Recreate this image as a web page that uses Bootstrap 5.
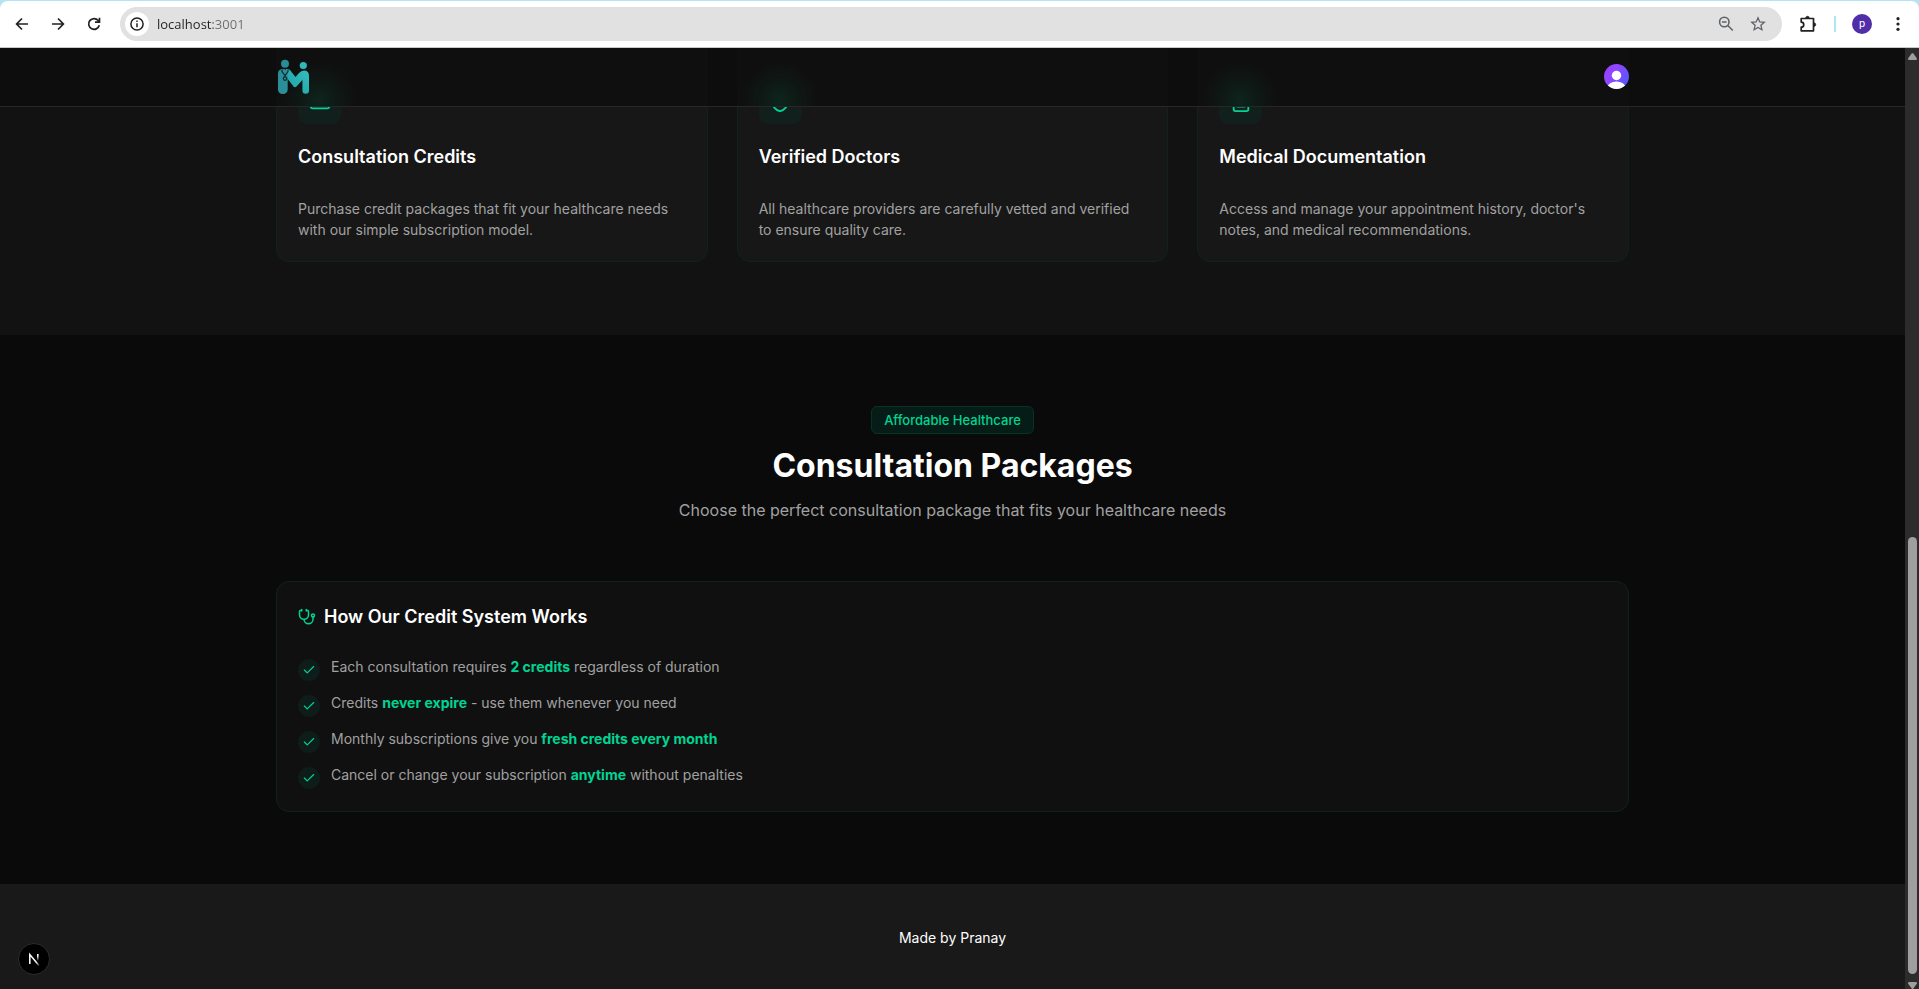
<!DOCTYPE html>
<html lang="en">
<head>
<meta charset="utf-8">
<meta name="viewport" content="width=device-width, initial-scale=1">
<title>Medimeet</title>
<link href="https://cdn.jsdelivr.net/npm/bootstrap@5.3.0/dist/css/bootstrap.min.css" rel="stylesheet">
<style>
  :root { --mint: #00d492; --muted: #a1a1a1; --frame: #b1e6f1; }
  body { font-family: Inter, "Liberation Sans", sans-serif; background: #0a0a0a; color: #fff; font-size: 14px; line-height: 21px; }

  /* browser toolbar */
  .chrome-frame { background: var(--frame); padding-top: 1px; border-bottom: 1px solid #c4ccc8; }
  .chrome-bar { background: #fff; border-radius: 8px 8px 0 0; height: 46px; padding: 0 13px 0 8px; }
  .tool { width: 28px; height: 28px; padding: 0; border: 0; background: none; color: #202124; display: flex; align-items: center; justify-content: center; }
  .omnibox { background: #e1e1e1; height: 34px; border-radius: 17px; padding: 0 10px 0 5px; margin: 0 8px 0 12px; }
  .omnibox .tool { color: #5f6368; }
  .omnibox .site-info { width: 24px; height: 24px; border-radius: 50%; background: #fff; color: #202124; }
  .address { border: 0; outline: 0; padding: 0; font: 13px/20px "Open Sans", "Noto Sans", sans-serif; color: #202124;
    background: linear-gradient(90deg, #202124 56px, #6a6d70 56px); -webkit-background-clip: text; background-clip: text; -webkit-text-fill-color: transparent; }
  .bar-divider { width: 2px; height: 16px; background: var(--frame); margin: 0 16px 0 12px; }
  .profile { width: 20px; height: 20px; border-radius: 50%; background: #512da8; color: #fff; font: 11px/18px Roboto, sans-serif; border: 0; padding: 0; }
  .menu-dots { width: 16px; margin-left: 18px; }

  /* page */
  .wrap { width: 100%; max-width: 1353px; margin: 0 auto; }
  .site-header { top: 0; left: 0; right: 0; height: 59px; z-index: 5; background: #0d0d0d; border-bottom: 1px solid #272727; }
  .header-row { height: 57px; }
  .header-glow { inset: 0; pointer-events: none; }
  .glow-spot { height: 58px; background: radial-gradient(circle 38px at 43px 52px, rgba(0,212,146,.11), rgba(0,212,146,.05) 45%, rgba(0,212,146,0)), #0f0f0f; }
  .brand { margin-left: 2px; }
  .user-btn { width: 25px; height: 25px; border: 0; padding: 0; border-radius: 50%; background: none; }
  .features { background: #121212; padding: 10px 0 73px; }
  .feature-grid { --bs-gutter-x: 29px; }
  .panel { border: 1px solid #0f231c; border-radius: 13px; padding: 22px 28px 21px 21px; background: #171717; }
  .icon-tile { width: 43px; height: 43px; padding-top: 10px; border-radius: 9px; background: #11201c; color: var(--mint); margin-bottom: 19px; }
  .panel-title { font-size: 18px; line-height: 28px; font-weight: 600; margin: 0; }
  .soft { color: var(--muted); }
  .feature-text { margin: 27px 0 0; }
  .pricing { padding: 71px 0 72px; }
  .tagline { display: inline-block; background: #061d17; border: 1px solid #073326; border-radius: 6px; color: var(--mint); font-size: 13px; line-height: 18px; font-weight: 500; padding: 4px 12px; }
  .pricing-title { font-size: 32px; line-height: 36px; font-weight: 700; margin: 14px 0; }
  .lede { font-size: 16px; line-height: 24px; margin: 0 0 59px; }
  .credit-panel { background: #101010; padding-top: 21px; }
  .perks { margin: 25px 0 0; display: grid; gap: 11px; }
  .perks li { gap: 11px; height: 25px; }
  .credit-panel { padding-bottom: 22px; }
  .tick { width: 22px; height: 22px; margin-top: 3px; border-radius: 50%; background: #0e1d19; color: var(--mint); }
  .perks strong { color: var(--mint); font-weight: 700; }
  .site-footer { background: #191919; padding: 43px 0; }
  .dev-badge { left: 18px; bottom: 14px; width: 32px; height: 32px; border-radius: 50%; background: #000; border: 1px solid #2c2c2c; padding: 0; z-index: 6; }

  /* scroll bar */
  .scroll-track { width: 14px; background: #2c2c2c; padding: 5px 0 0; }
  .scroll-rail { padding-top: 3px; padding-bottom: 8px; }
  .scroll-thumb { width: 9px; height: 48%; border-radius: 5px; background: #9f9f9f; }
</style>
</head>
<body>
<div class="vh-100 d-flex flex-column overflow-hidden">
  <div class="chrome-frame flex-shrink-0">
    <div class="chrome-bar d-flex align-items-center">
      <button class="tool" aria-label="Back"><svg width="14" height="14" viewBox="0 0 14 14" fill="none" stroke="currentColor" stroke-width="1.7"><path d="M13 7H2M7 1.5 1.6 7 7 12.5"/></svg></button>
      <button class="tool ms-2" aria-label="Forward"><svg width="14" height="14" viewBox="0 0 14 14" fill="none" stroke="currentColor" stroke-width="1.7"><path d="M1 7h11M7 1.5 12.4 7 7 12.5"/></svg></button>
      <button class="tool ms-2" aria-label="Reload"><svg width="14" height="14" viewBox="0 0 14 14" fill="none" stroke="currentColor" stroke-width="1.7"><path d="M12.3 8.3A5.4 5.4 0 1 1 11.2 3.5L12.6 5M12.5 .8V5.2H8"/></svg></button>
      <div class="omnibox d-flex align-items-center flex-grow-1">
        <button class="tool site-info flex-shrink-0" aria-label="Site information"><svg width="14" height="14" viewBox="0 0 14 14" fill="none" stroke="currentColor" stroke-width="1.5"><circle cx="7" cy="7" r="6.1"/><path d="M7 6.2v4M7 3.6v1.5"/></svg></button>
        <input class="address flex-grow-1 ms-2" type="text" value="localhost:3001" aria-label="Address">
        <button class="tool" aria-label="Zoom"><svg width="16" height="16" viewBox="0 0 16 16" fill="none" stroke="currentColor" stroke-width="1.6"><circle cx="6.3" cy="6" r="4.7"/><path d="m9.8 9.5 5 5M4 6h4.6"/></svg></button>
        <button class="tool ms-1" aria-label="Bookmark"><svg width="16" height="16" viewBox="0 0 16 16" fill="none" stroke="currentColor" stroke-width="1.3"><path d="m8 1.8 1.8 4.1 4.5.4-3.4 3 1 4.4L8 11.4l-3.9 2.3 1-4.4-3.4-3 4.5-.4z"/></svg></button>
      </div>
      <button class="tool ms-1" aria-label="Extensions"><svg width="18" height="18" viewBox="0 0 18 18" fill="none" stroke="currentColor" stroke-width="1.7" stroke-linejoin="round"><path d="M2.2 3.5h12.3v12.3H2.2v-3.6a2.5 2.5 0 0 0 0-5.1z"/><path d="M6.8 3a1.7 1.7 0 0 1 3.4 0zM15 7.9a1.7 1.7 0 0 1 0 3.4z" fill="currentColor" stroke-width=".8"/></svg></button>
      <div class="bar-divider"></div>
      <button class="profile" aria-label="Profile">p</button>
      <button class="tool menu-dots" aria-label="Menu"><svg width="4" height="14" viewBox="0 0 4 14" fill="currentColor"><circle cx="2" cy="1.7" r="1.6"/><circle cx="2" cy="7" r="1.6"/><circle cx="2" cy="12.3" r="1.6"/></svg></button>
    </div>
  </div>

  <div class="d-flex flex-grow-1 overflow-hidden">
    <div class="flex-grow-1 position-relative overflow-hidden">
      <header class="site-header position-absolute">
        <!-- light of the feature icons passing under the bar -->
        <div class="header-glow position-absolute" aria-hidden="true">
          <div class="wrap"><div class="row feature-grid">
            <div class="col-4"><div class="glow-spot"></div></div>
            <div class="col-4"><div class="glow-spot"></div></div>
            <div class="col-4"><div class="glow-spot"></div></div>
          </div></div>
        </div>
        <div class="wrap header-row position-relative d-flex align-items-center justify-content-between">
          <a href="#" aria-label="Home" class="brand d-block lh-1">
            <svg width="32" height="36" viewBox="0 0 32 36">
              <defs><linearGradient id="teal" x1="0" y1="1" x2="1" y2="0"><stop offset="0" stop-color="#1d9fa9"/><stop offset="1" stop-color="#35bdbb"/></linearGradient></defs>
              <circle cx="7" cy="4.7" r="4" fill="#2a8c96"/><circle cx="25.3" cy="6.5" r="3.6" fill="#2eb8ba"/>
              <path d="M8 10Q12 9.500 13.500 13L17.500 18 21 14Q23 11.500 26 11.500 31 11.500 31 17V31.500a3.300 3.300 0 0 1-6.600 0V21L18.500 27.500Q17 29 15.500 27.500L9 19z" fill="url(#teal)"/>
              <rect y="10" width="9.700" height="25" rx="4.600" fill="#2a8f99"/>
              <path d="M4 10.500v2l3 4 3-4v-2M7 16v2" fill="none" stroke="#0d2c30" stroke-width="1.200"/><circle cx="7" cy="19.600" r="1.700" fill="none" stroke="#0d2c30" stroke-width="1.200"/>
            </svg>
          </a>
          <button class="user-btn" aria-label="Account"><svg class="d-block" width="25" height="25" viewBox="0 0 25 25">
            <defs><linearGradient id="violet" x1="0" y1="0" x2="1" y2=".6"><stop offset="0" stop-color="#9b3dff"/><stop offset=".4" stop-color="#9146ff"/><stop offset="1" stop-color="#5a55ff"/></linearGradient><clipPath id="disc"><circle cx="12.500" cy="12.500" r="12.500"/></clipPath></defs>
            <g clip-path="url(#disc)"><rect width="25" height="25" fill="url(#violet)"/><circle cx="12.500" cy="11.500" r="4.700" fill="#fff"/><ellipse cx="12.500" cy="23.500" rx="9" ry="6" fill="#fff"/></g></svg></button>
        </div>
      </header>

      <section class="features">
        <div class="wrap">
          <div class="row feature-grid">
            <div class="col-4"><div class="panel h-100">
              <div class="icon-tile d-flex align-items-start justify-content-center"><svg width="22" height="22" viewBox="0 0 24 24" fill="none" stroke="currentColor" stroke-width="2" stroke-linecap="round" stroke-linejoin="round"><rect width="20" height="14" x="2" y="5" rx="2"/><path d="M2 10h20"/></svg></div>
              <h3 class="panel-title">Consultation Credits</h3>
              <p class="feature-text soft">Purchase credit packages that fit your healthcare needs with our simple subscription model.</p>
            </div></div>
            <div class="col-4"><div class="panel h-100">
              <div class="icon-tile d-flex align-items-start justify-content-center"><svg width="22" height="22" viewBox="0 0 24 24" fill="none" stroke="currentColor" stroke-width="2" stroke-linecap="round" stroke-linejoin="round"><path d="M20 13c0 5-3.500 7.500-7.660 8.950a1 1 0 0 1-.670-.010C7.500 20.500 4 18 4 13V6a1 1 0 0 1 1-1c2 0 4.500-1.200 6.240-2.720a1.170 1.170 0 0 1 1.520 0C14.510 3.810 17 5 19 5a1 1 0 0 1 1 1z"/><path d="m9 12 2 2 4-4"/></svg></div>
              <h3 class="panel-title">Verified Doctors</h3>
              <p class="feature-text soft">All healthcare providers are carefully vetted and verified to ensure quality care.</p>
            </div></div>
            <div class="col-4"><div class="panel h-100">
              <div class="icon-tile d-flex align-items-start justify-content-center"><svg width="22" height="22" viewBox="0 0 24 24" fill="none" stroke="currentColor" stroke-width="2" stroke-linecap="round" stroke-linejoin="round"><path d="M15 2H6a2 2 0 0 0-2 2v16a2 2 0 0 0 2 2h12a2 2 0 0 0 2-2V7z"/><path d="M14 2v4a2 2 0 0 0 2 2h4M10 9H8M16 13H8M16 17H8"/></svg></div>
              <h3 class="panel-title">Medical Documentation</h3>
              <p class="feature-text soft">Access and manage your appointment history, doctor's notes, and medical recommendations.</p>
            </div></div>
          </div>
        </div>
      </section>

      <section class="pricing">
        <div class="wrap">
          <div class="text-center">
            <div class="d-flex justify-content-center"><span class="tagline">Affordable Healthcare</span></div>
            <h2 class="pricing-title">Consultation Packages</h2>
            <p class="lede soft">Choose the perfect consultation package that fits your healthcare needs</p>
          </div>
          <div class="panel credit-panel">
            <h3 class="panel-title d-flex align-items-center gap-2"><svg width="18" height="18" viewBox="0 0 24 24" fill="none" stroke="#00d492" stroke-width="2" stroke-linecap="round" stroke-linejoin="round"><path d="M11 2v2M5 2v2M5 3H4a2 2 0 0 0-2 2v4a6 6 0 0 0 12 0V5a2 2 0 0 0-2-2h-1M8 15a6 6 0 0 0 12 0v-3"/><circle cx="20" cy="10" r="2"/></svg>How Our Credit System Works</h3>
            <ul class="perks list-unstyled soft">
              <li class="d-flex align-items-start"><span class="tick d-flex align-items-center justify-content-center"><svg width="14" height="14" viewBox="0 0 24 24" fill="none" stroke="currentColor" stroke-width="2" stroke-linecap="round" stroke-linejoin="round"><path d="M20 6 9 17l-5-5"/></svg></span><span>Each consultation requires <strong>2 credits</strong> regardless of duration</span></li>
              <li class="d-flex align-items-start"><span class="tick d-flex align-items-center justify-content-center"><svg width="14" height="14" viewBox="0 0 24 24" fill="none" stroke="currentColor" stroke-width="2" stroke-linecap="round" stroke-linejoin="round"><path d="M20 6 9 17l-5-5"/></svg></span><span>Credits <strong>never expire</strong> - use them whenever you need</span></li>
              <li class="d-flex align-items-start"><span class="tick d-flex align-items-center justify-content-center"><svg width="14" height="14" viewBox="0 0 24 24" fill="none" stroke="currentColor" stroke-width="2" stroke-linecap="round" stroke-linejoin="round"><path d="M20 6 9 17l-5-5"/></svg></span><span>Monthly subscriptions give you <strong>fresh credits every month</strong></span></li>
              <li class="d-flex align-items-start"><span class="tick d-flex align-items-center justify-content-center"><svg width="14" height="14" viewBox="0 0 24 24" fill="none" stroke="currentColor" stroke-width="2" stroke-linecap="round" stroke-linejoin="round"><path d="M20 6 9 17l-5-5"/></svg></span><span>Cancel or change your subscription <strong>anytime</strong> without penalties</span></li>
            </ul>
          </div>
        </div>
      </section>

      <footer class="site-footer text-center">Made by Pranay</footer>

      <button class="dev-badge position-absolute d-flex align-items-center justify-content-center" aria-label="Next.js dev tools"><svg width="14" height="14" viewBox="0 0 14 14" fill="none" stroke-width="1.500">
        <defs><linearGradient id="fadeA" x1="0" y1="0" x2="1" y2="1"><stop offset=".7" stop-color="#fff"/><stop offset="1" stop-color="#fff" stop-opacity=".2"/></linearGradient><linearGradient id="fadeB" gradientUnits="userSpaceOnUse" x1="0" y1="2" x2="0" y2="9"><stop offset=".3" stop-color="#fff"/><stop offset="1" stop-color="#fff" stop-opacity="0"/></linearGradient></defs>
        <path d="M2.800 12V2.500L12 13.500" stroke="url(#fadeA)"/><path d="M10.800 2v7h.010" stroke="url(#fadeB)"/></svg></button>
    </div>

    <div class="scroll-track flex-shrink-0 d-flex flex-column align-items-center" aria-hidden="true">
      <svg class="flex-shrink-0" width="9" height="7" viewBox="0 0 9 7" fill="#9f9f9f"><path d="M3.700.600q.8-1 1.600 0L9 5.500Q9 7 8 7H1Q0 7 0 5.500z"/></svg>
      <div class="scroll-rail flex-grow-1 w-100 d-flex flex-column justify-content-end align-items-center"><div class="scroll-thumb"></div></div>
      <svg class="flex-shrink-0" width="9" height="7" viewBox="0 0 9 7" fill="#9f9f9f"><path d="M3.700 6.400q.8 1 1.600 0L9 1.500Q9 0 8 0H1Q0 0 0 1.500z"/></svg>
    </div>
  </div>
</div>
<script src="https://cdn.jsdelivr.net/npm/bootstrap@5.3.0/dist/js/bootstrap.bundle.min.js"></script>
</body>
</html>
